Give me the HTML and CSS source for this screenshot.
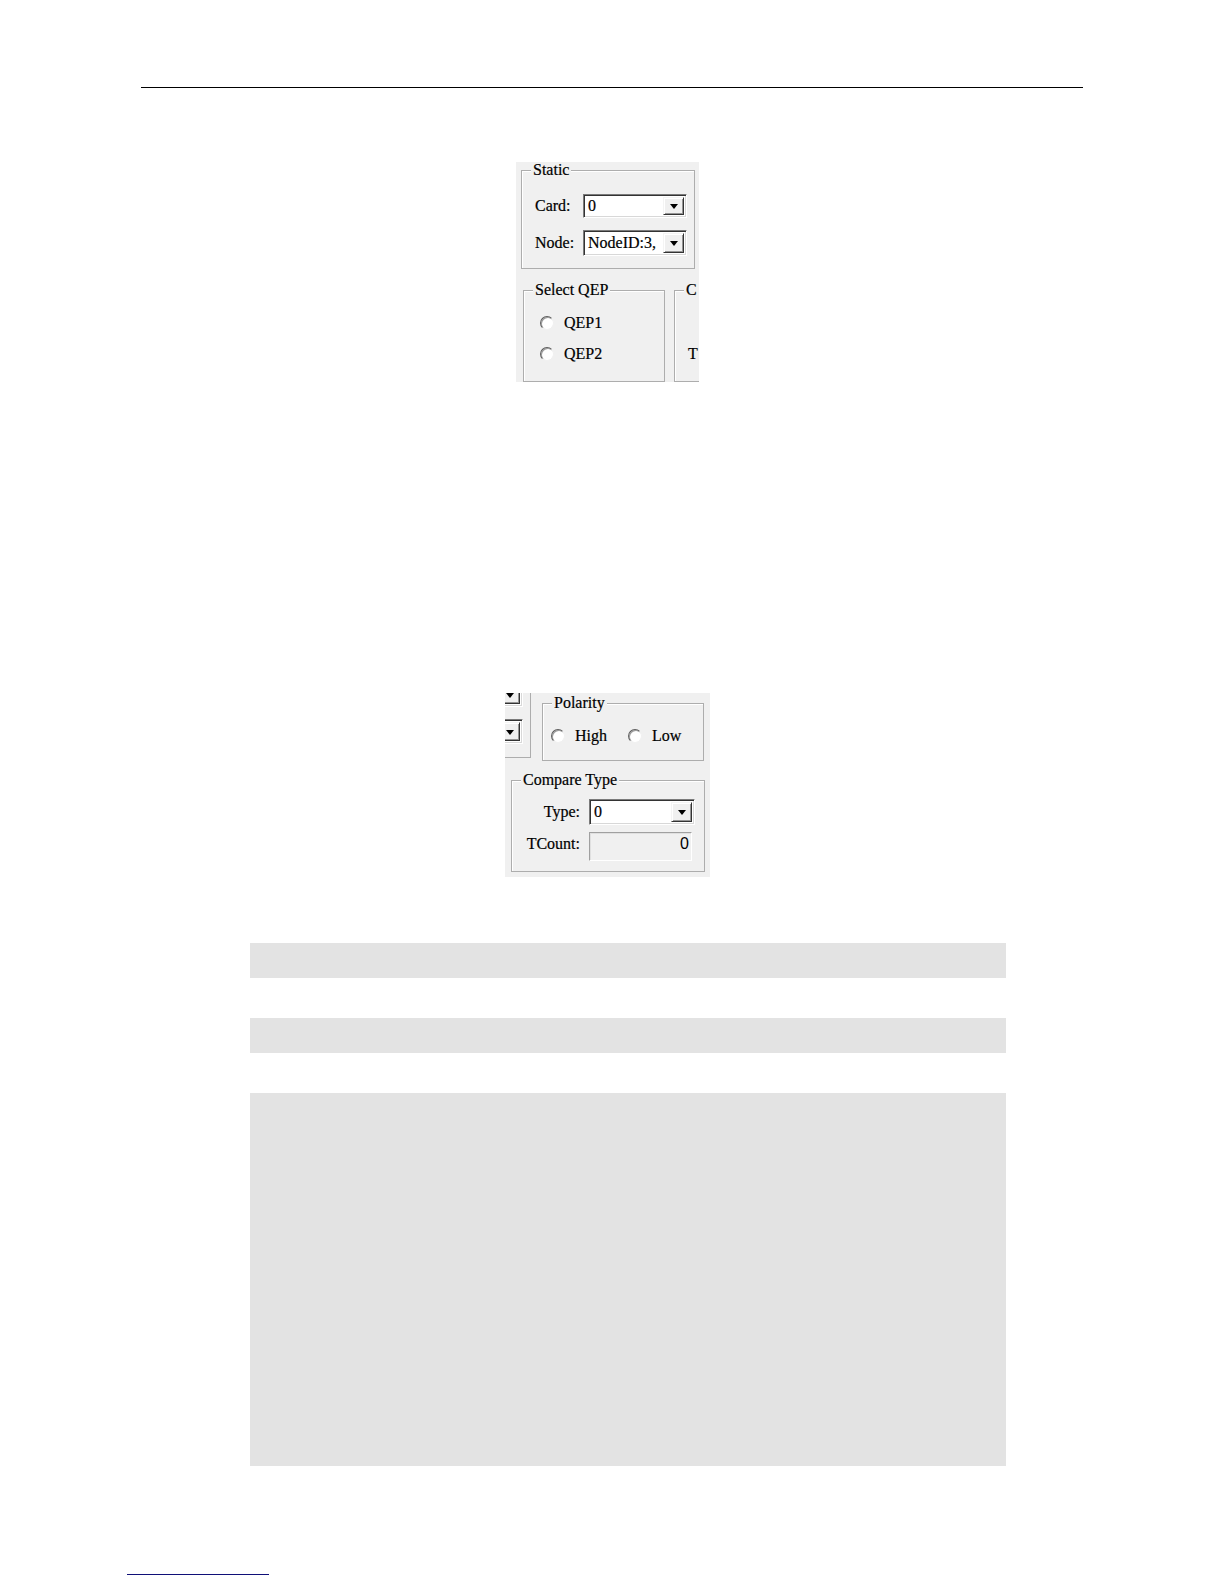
FILE: index.html
```html
<!DOCTYPE html>
<html>
<head>
<meta charset="utf-8">
<link rel="stylesheet" href="styles.css">
</head>
<body>
<div class="page">
  <div class="header-rule"></div>

  <div class="fig fig1">
    <div class="group static">
      <span class="legend">Static</span>
      <div class="field-row">
        <span class="lbl">Card:</span>
        <div class="combo combo-card"><span class="combo-text">0</span><span class="combo-btn"><i class="arrow"></i></span></div>
      </div>
      <div class="field-row">
        <span class="lbl">Node:</span>
        <div class="combo combo-node"><span class="combo-text">NodeID:3,</span><span class="combo-btn"><i class="arrow"></i></span></div>
      </div>
    </div>
    <div class="bottom-row">
      <div class="group qep">
        <span class="legend">Select QEP</span>
        <label class="radio"><span class="dot"></span><span>QEP1</span></label>
        <label class="radio"><span class="dot"></span><span>QEP2</span></label>
      </div>
      <div class="group compare">
        <span class="legend">C</span>
        <div class="cmp-grid">
          <span class="cmp-lbl"></span>
          <div class="combo-spacer"></div>
          <span class="cmp-lbl-left tcount-lbl">T</span>
        </div>
      </div>
    </div>
  </div>

  <div class="fig fig2">
    <div class="top-row">
      <div class="group left-clip">
        <div class="combo combo-hidden"><span class="combo-text"></span><span class="combo-btn"><i class="arrow"></i></span></div>
        <div class="combo combo-hidden"><span class="combo-text"></span><span class="combo-btn"><i class="arrow"></i></span></div>
      </div>
      <div class="group polarity">
        <span class="legend">Polarity</span>
        <div class="radio-line">
          <label class="radio"><span class="dot"></span><span>High</span></label>
          <label class="radio"><span class="dot"></span><span>Low</span></label>
        </div>
      </div>
    </div>
    <div class="group compare compare2">
      <span class="legend">Compare Type</span>
      <div class="cmp-grid">
        <span class="cmp-lbl">Type:</span>
        <div class="combo combo-type"><span class="combo-text">0</span><span class="combo-btn"><i class="arrow"></i></span></div>
        <span class="cmp-lbl tcount-lbl">TCount:</span>
        <div class="edit-disabled">0</div>
      </div>
    </div>
  </div>

  <div class="code-block short first"></div>
  <div class="code-block short"></div>
  <div class="code-block tall"></div>

  <div class="footnote-rule"></div>
</div>
</body>
</html>
```

FILE: styles.css
```css
body {
  margin: 0;
  background: #ffffff;
  font-family: "Liberation Serif", "Times New Roman", serif;
}

.page {
  padding-top: 87px;
}

.header-rule {
  margin-left: 141px;
  width: 942px;
  border-top: 1px solid #000;
}

/* dialog crops */
.fig {
  background: #f0f0f0;
  overflow: hidden;
  font-size: 16px;
  line-height: 16px;
  color: #000;
  box-sizing: border-box;
  -webkit-text-stroke: 0.2px #000;
}

.fig1 {
  margin: 74px 0 0 516px;
  width: 183px;
  height: 220px;
}

.fig2 {
  margin: 311px 0 0 505px;
  width: 205px;
  height: 184px;
}

.group {
  position: relative;
  box-sizing: border-box;
  border: 1px solid #adadad;
  box-shadow: inset 1px 1px 0 #ffffff;
  flex-shrink: 0;
}

.legend {
  position: absolute;
  top: -9px;
  left: 9px;
  padding: 0 2px;
  background: #f0f0f0;
  white-space: nowrap;
}

/* Static group */
.static {
  margin: 8px 0 0 5px;
  width: 174px;
  height: 99px;
  padding: 23px 0 0 13px;
}

.field-row {
  display: flex;
  align-items: center;
}

.field-row + .field-row {
  margin-top: 12px;
}

.lbl {
  width: 48px;
  flex-shrink: 0;
}

/* combo box */
.combo {
  display: flex;
  box-sizing: border-box;
  background: #fff;
  border: 1px solid;
  border-color: #7a7a7a #ffffff #ffffff #7a7a7a;
  box-shadow: inset 1px 1px 0 #333333, inset -1px -1px 0 #d8d8d8;
  padding: 2px;
  flex-shrink: 0;
}

.combo-card {
  width: 104px;
  height: 24px;
}

.combo-node {
  width: 104px;
  height: 26px;
}

.combo-type {
  width: 106px;
  height: 26px;
}

.combo-text {
  flex: 1;
  min-width: 0;
  overflow: hidden;
  white-space: nowrap;
  padding-left: 2px;
  align-self: center;
}

.combo-btn {
  width: 21px;
  flex-shrink: 0;
  box-sizing: border-box;
  background: #f0f0f0;
  border: 1px solid;
  border-color: #f4f4f4 #333333 #333333 #f4f4f4;
  box-shadow: inset 1px 1px 0 #ffffff, inset -1px -1px 0 #959595;
  display: flex;
  align-items: center;
  justify-content: center;
}

.arrow {
  width: 0;
  height: 0;
  border-left: 4.5px solid transparent;
  border-right: 4.5px solid transparent;
  border-top: 5px solid #000;
  margin-top: 1px;
}

/* bottom row of fig1 */
.bottom-row {
  display: flex;
  gap: 9px;
  margin: 21px 0 0 7px;
}

.qep {
  width: 142px;
  height: 92px;
  padding: 24px 0 0 16px;
}

.radio {
  display: flex;
  align-items: center;
  gap: 10px;
  height: 16px;
}

.qep .radio + .radio {
  margin-top: 15px;
}

.dot {
  width: 14px;
  height: 14px;
  box-sizing: border-box;
  border-radius: 50%;
  background: #ffffff;
  border: 1px solid;
  border-color: #5e5e5e #f0f0f0 #f0f0f0 #5e5e5e;
  box-shadow: inset 1px 1px 0 #9a9a9a;
  flex-shrink: 0;
}

/* compare type group */
.compare {
  width: 194px;
  height: 92px;
  padding: 18px 0 0 12px;
}

.compare2 {
  margin: 19px 0 0 6px;
}

.cmp-grid {
  display: grid;
  grid-template-columns: 56px auto;
  column-gap: 9px;
  row-gap: 7px;
  align-items: center;
}

.combo-spacer {
  width: 106px;
  height: 26px;
}

.cmp-lbl {
  text-align: right;
}

.cmp-lbl-left {
  text-align: left;
  padding-left: 1px;
}

.tcount-lbl {
  align-self: start;
  margin-top: 4px;
  height: 25px;
}

.edit-disabled {
  width: 103px;
  height: 29px;
  box-sizing: border-box;
  background: #f0f0f0;
  border: 1px solid;
  border-color: #a0a0a0 #ffffff #ffffff #a0a0a0;
  box-shadow: inset 1px 1px 0 #e0e0e0;
  text-align: right;
  padding: 3px 2px 0 0;
  font-family: "Liberation Sans", Arial, sans-serif;
  font-size: 16px;
  -webkit-text-stroke: 0;
}

/* fig2 top row */
.top-row {
  display: flex;
  align-items: flex-start;
}

.left-clip {
  width: 120px;
  height: 85px;
  margin: -20px 0 0 -94px;
  padding: 8px 7px 0 0;
  display: flex;
  flex-direction: column;
  align-items: flex-end;
  gap: 12px;
}

.combo-hidden {
  width: 100px;
  height: 25px;
}

.polarity {
  width: 162px;
  height: 58px;
  margin: 10px 0 0 11px;
  padding: 24px 0 0 8px;
}

.radio-line {
  display: flex;
  gap: 21px;
}

/* grey blank blocks */
.code-block {
  margin-left: 250px;
  width: 756px;
  background: #e3e3e3;
}

.short {
  height: 35px;
  margin-top: 40px;
}

.short.first {
  margin-top: 66px;
}

.tall {
  height: 373px;
  margin-top: 40px;
}

.footnote-rule {
  margin: 108px 0 0 127px;
  width: 142px;
  border-top: 1px solid #101078;
}
```
